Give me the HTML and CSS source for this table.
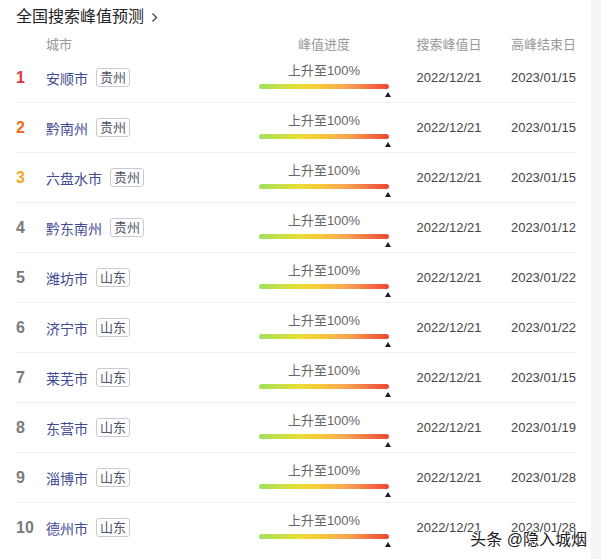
FILE: index.html
```html
<!DOCTYPE html>
<html lang="zh">
<head>
<meta charset="utf-8">
<link rel="stylesheet" href="styles.css">
</head>
<body>
<div class="panel">
  <div class="title">全国搜索峰值预测<svg class="chev" width="7" height="11" viewBox="0 0 7 11"><polyline points="1.5,1.5 5.5,5.5 1.5,9.5" fill="none" stroke="#444" stroke-width="1.3"/></svg></div>
  <div class="table">
    <div class="row head">
      <div></div>
      <div class="city-h">城市</div>
      <div class="center">峰值进度</div>
      <div class="center">搜索峰值日</div>
      <div class="right">高峰结束日</div>
    </div>

    <div class="row">
      <div class="rank r1">1</div>
      <div class="city"><span class="name">安顺市</span><span class="tag">贵州</span></div>
      <div class="prog"><span class="ptext">上升至100%</span><div class="bar"><i class="mark"></i></div></div>
      <div class="center date">2022/12/21</div>
      <div class="right date">2023/01/15</div>
    </div>
    <div class="row">
      <div class="rank r2">2</div>
      <div class="city"><span class="name">黔南州</span><span class="tag">贵州</span></div>
      <div class="prog"><span class="ptext">上升至100%</span><div class="bar"><i class="mark"></i></div></div>
      <div class="center date">2022/12/21</div>
      <div class="right date">2023/01/15</div>
    </div>
    <div class="row">
      <div class="rank r3">3</div>
      <div class="city"><span class="name">六盘水市</span><span class="tag">贵州</span></div>
      <div class="prog"><span class="ptext">上升至100%</span><div class="bar"><i class="mark"></i></div></div>
      <div class="center date">2022/12/21</div>
      <div class="right date">2023/01/15</div>
    </div>
    <div class="row">
      <div class="rank">4</div>
      <div class="city"><span class="name">黔东南州</span><span class="tag">贵州</span></div>
      <div class="prog"><span class="ptext">上升至100%</span><div class="bar"><i class="mark"></i></div></div>
      <div class="center date">2022/12/21</div>
      <div class="right date">2023/01/12</div>
    </div>
    <div class="row">
      <div class="rank">5</div>
      <div class="city"><span class="name">潍坊市</span><span class="tag">山东</span></div>
      <div class="prog"><span class="ptext">上升至100%</span><div class="bar"><i class="mark"></i></div></div>
      <div class="center date">2022/12/21</div>
      <div class="right date">2023/01/22</div>
    </div>
    <div class="row">
      <div class="rank">6</div>
      <div class="city"><span class="name">济宁市</span><span class="tag">山东</span></div>
      <div class="prog"><span class="ptext">上升至100%</span><div class="bar"><i class="mark"></i></div></div>
      <div class="center date">2022/12/21</div>
      <div class="right date">2023/01/22</div>
    </div>
    <div class="row">
      <div class="rank">7</div>
      <div class="city"><span class="name">莱芜市</span><span class="tag">山东</span></div>
      <div class="prog"><span class="ptext">上升至100%</span><div class="bar"><i class="mark"></i></div></div>
      <div class="center date">2022/12/21</div>
      <div class="right date">2023/01/15</div>
    </div>
    <div class="row">
      <div class="rank">8</div>
      <div class="city"><span class="name">东营市</span><span class="tag">山东</span></div>
      <div class="prog"><span class="ptext">上升至100%</span><div class="bar"><i class="mark"></i></div></div>
      <div class="center date">2022/12/21</div>
      <div class="right date">2023/01/19</div>
    </div>
    <div class="row">
      <div class="rank">9</div>
      <div class="city"><span class="name">淄博市</span><span class="tag">山东</span></div>
      <div class="prog"><span class="ptext">上升至100%</span><div class="bar"><i class="mark"></i></div></div>
      <div class="center date">2022/12/21</div>
      <div class="right date">2023/01/28</div>
    </div>
    <div class="row last">
      <div class="rank">10</div>
      <div class="city"><span class="name">德州市</span><span class="tag">山东</span></div>
      <div class="prog"><span class="ptext">上升至100%</span><div class="bar"><i class="mark"></i></div></div>
      <div class="center date">2022/12/21</div>
      <div class="right date">2023/01/28</div>
    </div>
  </div>
  <div class="watermark">头条 @隐入城烟</div>
</div>
</body>
</html>
```

FILE: styles.css
```css
html, body {
  margin: 0;
  padding: 0;
}
body {
  background: #f4f5f7;
  font-family: "Liberation Sans", "Noto Sans CJK SC", sans-serif;
  color: #333;
  width: 601px;
  height: 559px;
  overflow: hidden;
}
.panel {
  position: relative;
  width: 591px;
  height: 559px;
  background: #fff;
  padding: 6px 0 0 16px;
  box-sizing: border-box;
}
.title {
  font-size: 16px;
  line-height: 22px;
  color: #222;
  display: flex;
  align-items: center;
}
.chev {
  margin-left: 7px;
  margin-top: 1px;
}
.table {
  width: 560px;
  margin-top: 9px;
}
.row {
  display: grid;
  grid-template-columns: 30px 204px 148px 102px 76px;
  align-items: center;
  height: 49px;
  border-bottom: 1px solid #f1f1f2;
}
.row.last {
  border-bottom: none;
}
.row.head {
  height: 16px;
  border-bottom: none;
  font-size: 13px;
  color: #999;
  line-height: 16px;
}
.center { text-align: center; }
.right { text-align: right; }
.rank {
  font-size: 16px;
  font-weight: bold;
  color: #7a7a7a;
}
.rank.r1 { color: #e3323c; }
.rank.r2 { color: #f06b1e; }
.rank.r3 { color: #f5a623; }
.city {
  display: flex;
  align-items: center;
}
.name {
  font-size: 14px;
  color: #3f4b93;
}
.tag {
  margin-left: 8px;
  font-size: 13px;
  line-height: 17px;
  padding: 0 3px;
  border: 1px solid #c8cbd3;
  border-radius: 3px;
  color: #4f5566;
}
.prog {
  display: flex;
  flex-direction: column;
  align-items: center;
  align-self: start;
  padding-top: 10px;
}
.ptext {
  font-size: 13px;
  line-height: 16px;
  color: #666;
}
.bar {
  position: relative;
  width: 130px;
  height: 5px;
  margin-top: 5px;
  border-radius: 3px;
  background: linear-gradient(90deg, #9fe05c 0%, #e6df36 30%, #f6cc39 45%, #f8a352 68%, #ef4536 100%);
}
.mark {
  position: absolute;
  right: -2px;
  top: 8px;
  width: 0;
  height: 0;
  border-left: 3px solid transparent;
  border-right: 3px solid transparent;
  border-bottom: 5px solid #1e1e1e;
}
.date {
  font-size: 13px;
  color: #444;
}
.watermark {
  position: absolute;
  right: 4px;
  bottom: 9px;
  font-size: 16px;
  color: #1a1a1a;
  text-shadow: 0 0 2px #fff, 0 0 2px #fff, 1px 1px 0 #fff, -1px -1px 0 #fff;
}
```
